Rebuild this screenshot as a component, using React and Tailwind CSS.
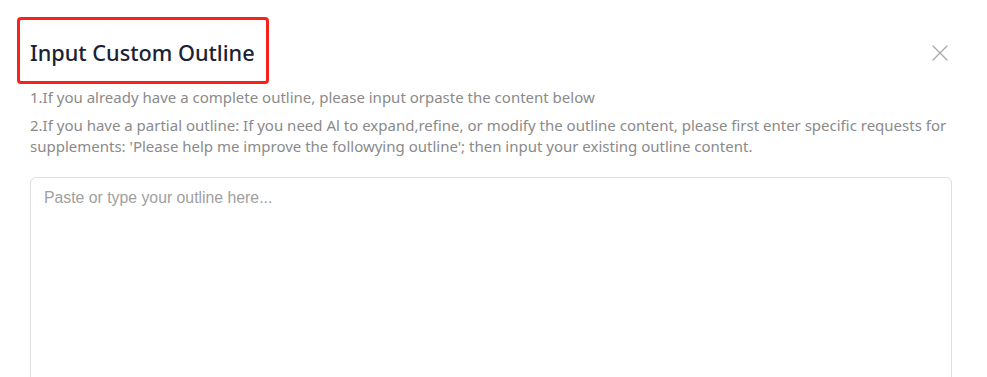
import React from 'react';
import { X } from 'lucide-react';

const App = () => {
    return (
        <div className="w-[987px] h-[377px] overflow-hidden bg-white font-['Noto_Sans',sans-serif]">
            <div className="pl-[30px] pr-[35px] pt-[17px]">
                <div className="flex items-start justify-between">
                    <div className="-ml-[13px] h-[67px] w-[252px] border-[3px] border-[#f5231b] rounded-[4px] flex items-center pl-[10px] pt-[5px]">
                        <h2 className="text-[21.7px] font-medium text-[#1a2233] leading-none">
                            Input Custom Outline
                        </h2>
                    </div>
                    <button className="mt-[22px] mr-[-2px] text-[#a8a8a8]">
                        <X className="w-[28px] h-[28px]" strokeWidth={1.1} />
                    </button>
                </div>
                <div className="mt-[3px] text-[15px] leading-[21px] text-[#8a8a8a]">
                    <p>1.If you already have a complete outline, please input orpaste the content below</p>
                    <p className="mt-[7px]">
                        2.If you have a partial outline: If you need Al to expand,refine, or modify the outline content, please first enter specific requests for supplements: 'Please help me improve the followying outline'; then input your existing outline content.
                    </p>
                </div>
                <textarea
                    className="mt-[20px] block w-[922px] h-[240px] rounded-[6px] border border-[#dedede] px-[13px] py-[10px] text-[15.8px] leading-[20px] font-['Liberation_Sans',sans-serif] placeholder:text-[#a0a0a0] resize-none outline-none"
                    placeholder="Paste or type your outline here..."
                />
            </div>
        </div>
    );
};

export default App;
